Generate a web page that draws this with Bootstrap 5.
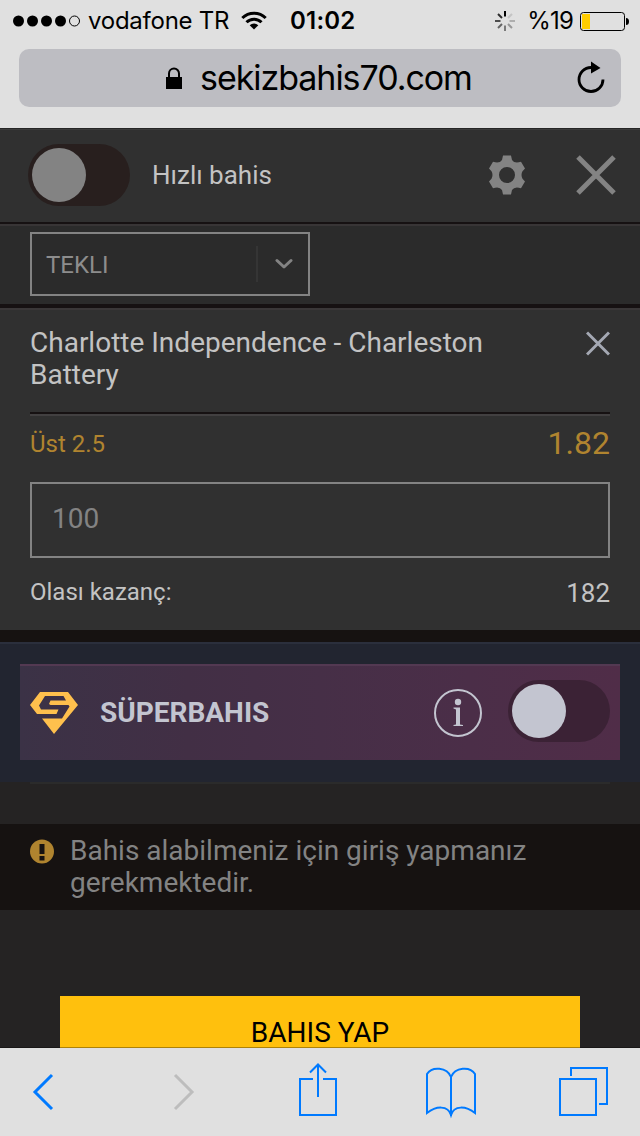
<!DOCTYPE html>
<html lang="tr">
<head>
<meta charset="utf-8">
<meta name="viewport" content="width=device-width, initial-scale=1">
<title>sekizbahis70.com</title>
<link href="https://cdn.jsdelivr.net/npm/bootstrap@5.3.0/dist/css/bootstrap.min.css" rel="stylesheet">
<style>
  body { width: 640px; height: 1136px; background: #252323; color: #c3c3c3; font-family: Roboto, sans-serif; font-size: 28px; line-height: 32px; }
  svg { display: block; flex: none; }
  .chrome { background: #e0e0e0; color: #000; font-family: Inter, "Liberation Sans", sans-serif; }
  .browser-head { height: 128px; }
  .status { height: 49px; padding: 1px 11px 8px 13px; font-size: 24px; line-height: 40px; }
  .carrier { width: 141px; margin-left: 7px; letter-spacing: -.25px; }
  .wifi { margin-left: 12px; }
  .clock { margin-left: 23px; font-weight: 600; letter-spacing: .2px; }
  .percent { margin-left: 12px; letter-spacing: -.8px; }
  .battery { margin-left: 7px; }
  .address { height: 58px; margin: 0 19px; border-radius: 10px; background: #bdbdc2; }
  .lock { margin-left: 147px; }
  .reload { margin: 0 16px 2px auto; }
  .host { font-size: 34px; line-height: 58px; margin-left: 18px; letter-spacing: -1.05px; }
  .slip-head { height: 96px; background: #303030; border-top: 1px solid #262626; border-bottom: 2px solid #161112; padding: 0 24px 2px 28px; box-shadow: inset 0 1px #3b3b3b; }
  .fast { margin-left: 22px; font-size: 26px; }
  .close-slip { margin-left: 50px; }
  .switch { width: 102px; height: 62px; border-radius: 31px; background: #281f1e; padding: 4px; flex: none; }
  .knob { width: 54px; height: 54px; border-radius: 50%; background: #838383; }
  .kind { height: 84px; background: #2b2b2b; border-top: 2px solid #383536; border-bottom: 4px solid #161112; padding: 6px 30px; }
  .picker { width: 280px; height: 64px; border: 2px solid #838383; color: #8d8d8d; font-size: 24px; padding-left: 14px; }
  .picker-text { padding-top: 2px; }
  .picker-mark { width: 52px; height: 36px; border-left: 2px solid #353535; padding-left: 17px; }
  .bet { height: 322px; background: #303030; border-top: 2px solid #3a3738; padding: 17px 30px 0; }
  .match { height: 87px; border-bottom: 2px solid #161112; box-shadow: 0 2px #424041; }
  .odds { height: 68px; color: #b0842f; padding-bottom: 8px; }
  .market { font-size: 24px; }
  .price { font-size: 32px; margin-bottom: 2px; }
  .stake { height: 76px; border: 2px solid #838383; border-radius: 0; background: transparent; color: #838383; font-size: 28px; padding: 0 20px 4px; }
  .stake:focus { background: transparent; color: #838383; box-shadow: none; }
  .win { height: 70px; font-size: 24px; }
  .win-label { margin-bottom: 2px; }
  .win-sum { font-size: 26px; }
  .super { height: 152px; border-top: 12px solid #161211; background: #222530; padding: 22px 20px; box-shadow: inset 0 2px #2b2f3c; }
  .banner { height: 96px; background: linear-gradient(90deg, #3b3246, #422f45 28%, #462f47 50%, #4b2e48 75%, #502d48); box-shadow: inset 0 2px #533952; padding: 2px 10px 0; color: #c3c5d0; }
  .banner .switch { background: #3b2235; margin: 0 0 4px 26px; }
  .banner .knob { background: #c3c5d0; }
  .super-name { margin-left: 22px; }
  .gap-row { height: 42px; margin: 0 30px; border-top: 2px solid #2b2b2b; }
  .warning-row { height: 86px; background: #161211; color: #838383; padding: 11px 30px; }
  .alert-mark { margin-top: 4px; }
  .action { height: 138px; padding: 86px 60px 0; overflow: hidden; }
  .place { height: 74px; border: 0; border-radius: 0; background: #ffc00d; color: #000; font-size: 28px; line-height: 74px; padding: 0; }
  .toolbar { height: 88px; padding: 12px 32px 0; box-shadow: 0 -1px rgba(0,0,0,.32); position: relative; }
  .forward { margin-left: 119px; }
  .share { margin-left: 104px; }
  .book { margin-left: 89px; }
  .tabs { margin-left: 83px; }
</style>
</head>
<body class="overflow-hidden d-flex flex-column">

<header class="chrome browser-head flex-shrink-0">
  <div class="status d-flex align-items-center text-nowrap">
    <svg width="68" height="14" viewBox="0 0 68 14"><circle cx="5.5" cy="7" r="5.5"/><circle cx="19.5" cy="7" r="5.5"/><circle cx="33.5" cy="7" r="5.5"/><circle cx="47.5" cy="7" r="5.5"/><circle cx="61.5" cy="7" r="5" fill="none" stroke="#000"/></svg>
    <span class="carrier">vodafone TR</span>
    <svg class="wifi" width="26" height="20" viewBox="0 0 26 20" fill="none" stroke="#000" stroke-width="3"><path d="M1.3 7a16.5 16.5 0 0 1 23.4 0"/><path d="M5.5 11.3a10.6 10.6 0 0 1 15 0"/><path d="M13 18.5l-4.3-4.2a6 6 0 0 1 8.6 0z" fill="#000" stroke="none"/></svg>
    <span class="clock">01:02</span>
    <svg class="ms-auto" width="20" height="20" viewBox="-10 -10 20 20" stroke="#000" stroke-width="2"><path d="M0-4.500V-10"/><path d="M3-3 7-7" opacity=".12"/><path d="M4.500 0H10" opacity=".22"/><path d="M3 3 7 7" opacity=".32"/><path d="M0 4.500V10" opacity=".45"/><path d="M-3 3-7 7" opacity=".55"/><path d="M-4.500 0H-10" opacity=".65"/><path d="M-3-3-7-7" opacity=".8"/></svg>
    <span class="percent">%19</span>
    <svg class="battery" width="49" height="19" viewBox="0 0 49 19"><rect x=".5" y=".5" width="44" height="18" rx="3" fill="none" stroke="#000"/><rect x="2" y="2" width="8" height="15" fill="#fc0"/><path d="M46 6q3 0 3 3.500t-3 3.500z"/></svg>
  </div>
  <div class="address d-flex align-items-center">
    <svg class="lock" width="16" height="22" viewBox="0 0 16 22"><path d="M3 11V6.500a5 5 0 0 1 10 0V11" fill="none" stroke="#000" stroke-width="2"/><path d="M0 10h16v12H0z"/></svg>
    <span class="host">sekizbahis70.com</span>
    <svg class="reload" width="28" height="32" viewBox="0 0 28 32"><path d="M26 18.500A12 12 0 1 1 14 6.500H15" fill="none" stroke="#000" stroke-width="2.800"/><path d="M14 .5v12L23.500 7z"/></svg>
  </div>
</header>

<main class="flex-grow-1 overflow-hidden">
  <div class="slip-head d-flex align-items-center">
    <div class="switch"><div class="knob"></div></div>
    <span class="fast">Hızlı bahis</span>
    <svg class="ms-auto" width="38" height="40" viewBox="-19 -20 38 40" fill="#838383"><path fill-rule="evenodd" d="M-4-19.500H4L5-15Q7.500-11 14-13.200L18-6.500 15.500-3.700Q13.500 0 15.500 3.700L18 6.500 14 13.200Q7.500 11 5 15L4 19.500H-4L-5 15Q-7.500 11-14 13.200L-18 6.500-15.500 3.700Q-13.500 0-15.500-3.700L-18-6.500-14-13.200Q-7.500-11-5-15zM0-8a8 8 0 1 0 0 16A8 8 0 0 0 0-8z"/></svg>
    <svg class="close-slip" width="40" height="40" viewBox="0 0 40 40" stroke="#838383" stroke-width="5"><path d="M2 2l36 36M38 2 2 38"/></svg>
  </div>

  <div class="kind">
    <div class="picker d-flex align-items-center justify-content-between">
      <span class="picker-text">TEKLI</span>
      <div class="picker-mark d-flex align-items-center"><svg width="18" height="12" viewBox="0 0 18 12" fill="none" stroke="#838383" stroke-width="3" stroke-linecap="round" stroke-linejoin="round"><path d="M2 2.500 9 9l7-6.500"/></svg></div>
    </div>
  </div>

  <section class="bet">
    <div class="match d-flex justify-content-between">
      <div>Charlotte Independence - Charleston<br>Battery</div>
      <svg class="mt-1" width="24" height="26" viewBox="0 0 24 26" stroke="#a4a8b3" stroke-width="3"><path d="M1 1.500l22 22M23 1.500l-22 22"/></svg>
    </div>
    <div class="odds d-flex align-items-center justify-content-between">
      <span class="market">Üst 2.5</span><span class="price">1.82</span>
    </div>
    <input class="stake form-control" type="text" value="100" aria-label="100">
    <div class="win d-flex align-items-center justify-content-between"><span class="win-label">Olası kazanç:</span><span class="win-sum">182</span></div>
  </section>

  <section class="super">
    <div class="banner d-flex align-items-center">
      <svg width="48" height="42" viewBox="0 0 48 42"><path fill="#ffc04d" d="M10 0H38L48 13 24 42 12 26.500H32L39.500 14.500 38.500 13H20.500L19 12 20.500 8.500H36L33.500 4H15L9 13.500 11 17.500H28.500L26.500 22H7L0 13z"/></svg>
      <span class="super-name fw-bold">SÜPERBAHIS</span>
      <svg class="ms-auto" width="48" height="48" viewBox="0 0 48 48" fill="#c3c5d0"><circle cx="24" cy="24" r="23" fill="none" stroke="#c3c5d0" stroke-width="2"/><circle cx="24" cy="13" r="3.200"/><path d="M19.500 18.500h6.500v17l3 .5v1h-9.500v-1l2.500-.5v-15l-2.500-1z"/></svg>
      <div class="switch"><div class="knob"></div></div>
    </div>
  </section>
  <div class="gap-row"></div>

  <div class="warning-row d-flex">
    <svg class="alert-mark" width="24" height="25" viewBox="0 0 24 25"><circle cx="12" cy="12.400" r="12" fill="#b0842f"/><path fill="#161211" d="M9.500 5h5v10h-5zM9.500 17h5v4.500h-5z"/></svg>
    <div class="ms-3">Bahis alabilmeniz için giriş yapmanız<br>gerekmektedir.</div>
  </div>

  <div class="action"><button class="place btn w-100" type="button">BAHIS YAP</button></div>
</main>

<footer class="chrome toolbar d-flex flex-shrink-0">
  <svg width="22" height="64" viewBox="0 0 22 64" fill="none" stroke="#007aff" stroke-width="3"><path d="M20 15 3 32l17 17"/></svg>
  <svg class="forward" width="22" height="64" viewBox="0 0 22 64" fill="none" stroke="#bdbdbd" stroke-width="3"><path d="M2 15l17 17L2 49"/></svg>
  <svg class="share" width="38" height="64" viewBox="0 0 38 64" fill="none" stroke="#007aff" stroke-width="2"><path d="M14 19H1v36h36V19H24M19 37V4.500M11 12.500l8-8 8 8"/></svg>
  <svg class="book" width="50" height="64" viewBox="0 0 50 64" fill="none" stroke="#007aff" stroke-width="2"><path d="M25 56V17C21 7 6 6 1 14V53C10 46 22 45 25 55C28 45 40 46 49 53V14C44 6 29 7 25 17"/></svg>
  <svg class="tabs" width="50" height="64" viewBox="0 0 50 64" fill="none" stroke="#007aff" stroke-width="2"><path d="M1 19h36v36H1zM12 16V8h36v36h-8"/></svg>
</footer>
<script src="https://cdn.jsdelivr.net/npm/bootstrap@5.3.0/dist/js/bootstrap.bundle.min.js"></script>
</body>
</html>
